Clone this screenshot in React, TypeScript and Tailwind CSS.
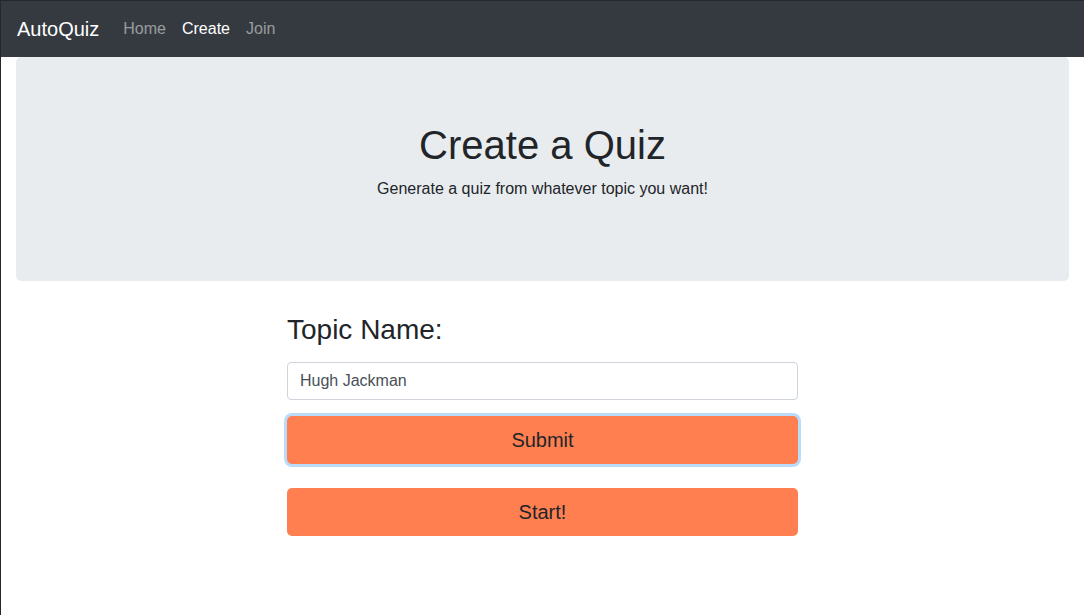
export default function App() {
    return (
        <div className="min-h-[615px] bg-white border-l border-t border-[#24282c] text-[#212529] font-['Liberation_Sans',Arial,sans-serif]">
            {/* Navbar */}
            <nav className="h-14 bg-[#343a40] flex items-center px-4">
                <span className="text-white text-xl leading-[30px] mr-4">AutoQuiz</span>
                <div className="flex text-base leading-6">
                    <a className="px-2 text-white/50">Home</a>
                    <a className="px-2 text-white">Create</a>
                    <a className="px-2 text-white/50">Join</a>
                </div>
            </nav>

            <div className="px-[15px]">
                {/* Jumbotron */}
                <div className="bg-[#e9ecef] rounded-[5px] py-16 px-8 mb-8 text-center">
                    <h1 className="text-[40px] leading-[48px] mb-2">Create a Quiz</h1>
                    <p className="text-base leading-6 mb-4">Generate a quiz from whatever topic you want!</p>
                </div>

                {/* Form */}
                <div className="w-[511px] mx-auto flex flex-col">
                    <h3 className="text-[28px] leading-[34px] mb-[15px]">Topic Name:</h3>
                    <input
                        className="h-[38px] border border-[#ced4da] rounded px-3 text-base text-[#495057] outline-none"
                        defaultValue="Hugh Jackman"
                    />
                    <button className="mt-4 h-12 bg-[#ff7f50] rounded-[5px] text-xl text-[#212529] shadow-[0_0_0_3px_#b9dcfd]">
                        Submit
                    </button>
                    <button className="mt-6 h-12 bg-[#ff7f50] rounded-[5px] text-xl text-[#212529]">
                        Start!
                    </button>
                </div>
            </div>
        </div>
    );
}
